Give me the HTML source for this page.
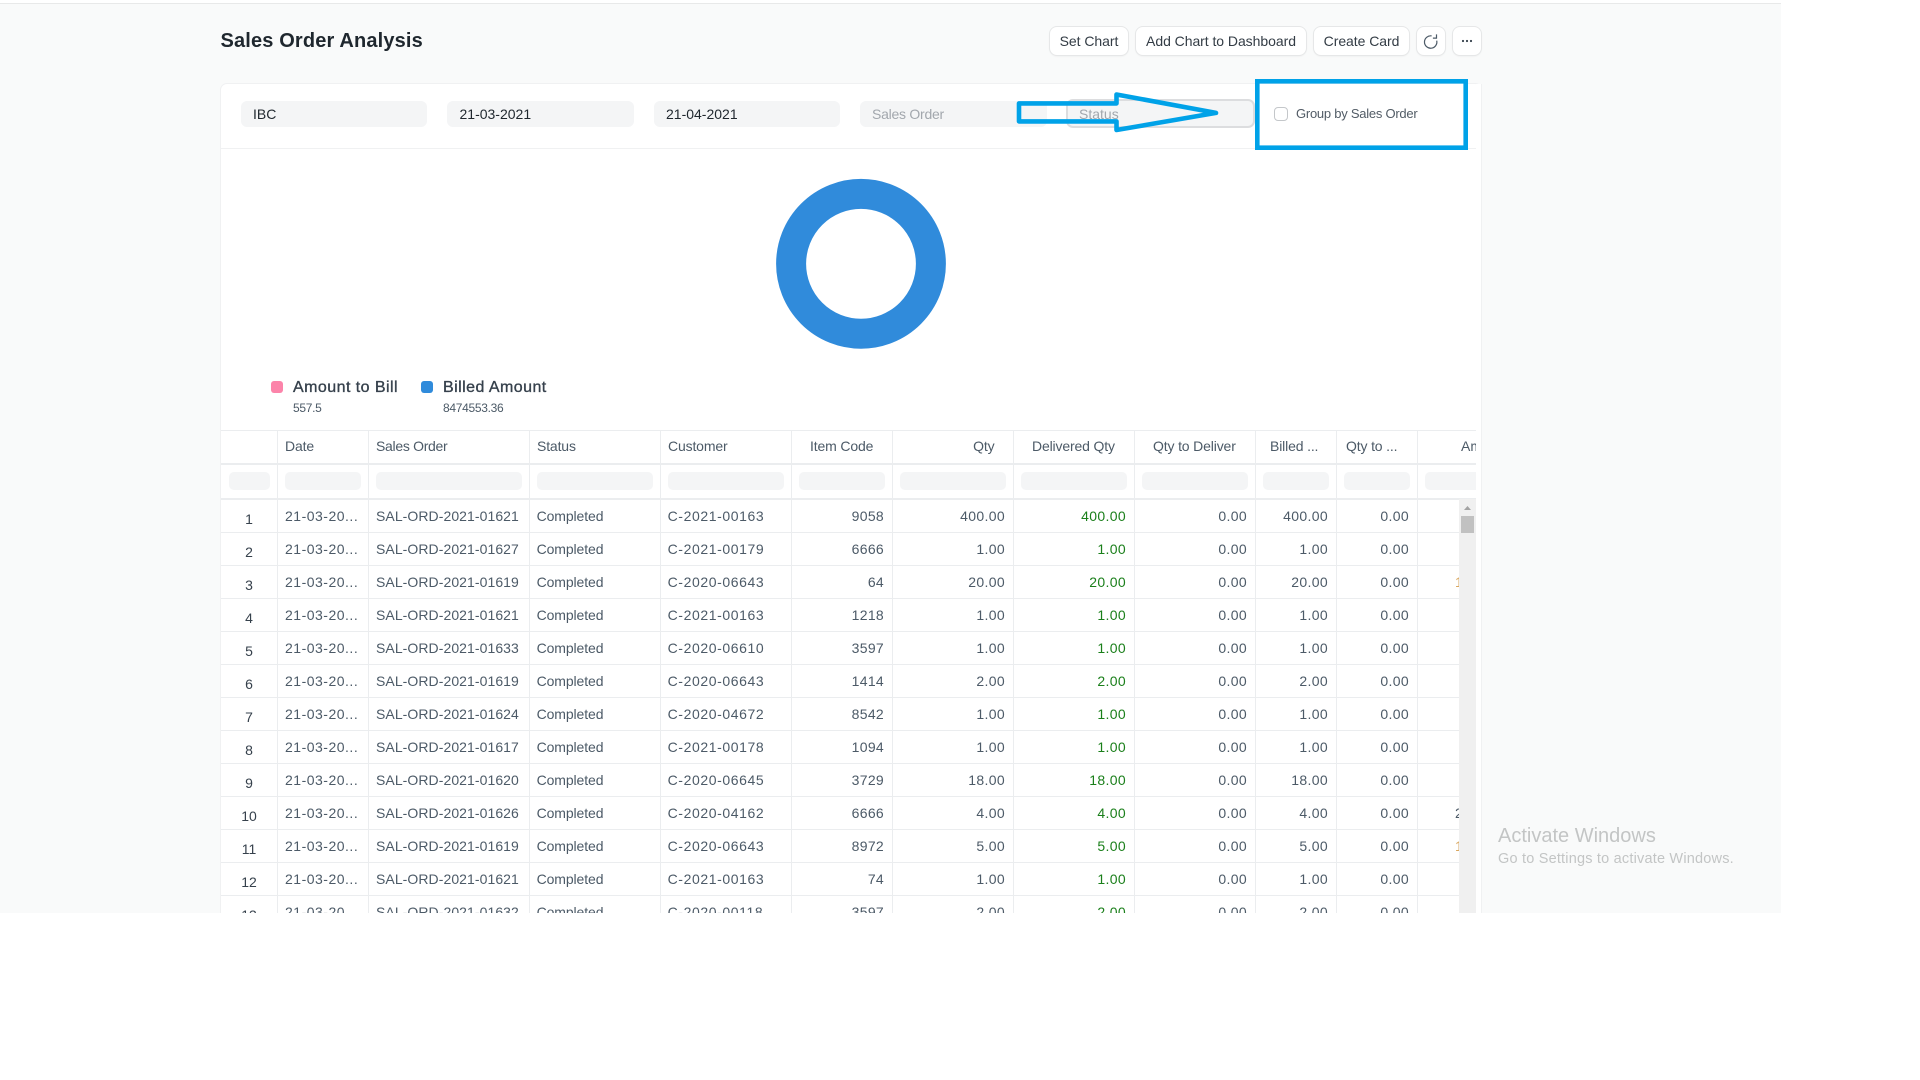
<!DOCTYPE html>
<html><head><meta charset="utf-8"><title>Sales Order Analysis</title>
<style>
html,body{margin:0;padding:0;width:1920px;height:1080px;overflow:hidden;background:#fff}
body{font-family:"Liberation Sans",sans-serif;color:#36414c;position:relative}
div,span,i{position:absolute;display:block;font-style:normal;white-space:nowrap}
#page{left:0;top:4px;width:1781px;height:909px;background:#f9fafa}
#topline{left:0;top:3px;width:1781px;height:1px;background:#e8e9e9}
#clip{left:0;top:0;width:1920px;height:913px;overflow:hidden}
#card{left:220px;top:83px;width:1260px;height:900px;background:#fff;border:1px solid #f0f1f2;border-radius:7px}
.title{left:220.5px;top:29px;line-height:24px;font-size:20px;font-weight:bold;letter-spacing:.15px;color:#1f272e}
.btn{top:27px;height:28px;line-height:28px;background:#fff;border-radius:7px;box-shadow:0 0 0 1px #e6e7e8,0 1px 2px rgba(0,0,0,.08);text-align:center;font-size:14px;letter-spacing:-.05px;color:#333c45}
.f{top:101px;height:26px;background:#f4f5f6;border-radius:6px;line-height:26px;font-size:14px;padding-left:12px;box-sizing:border-box;color:#1f272e}
.ph{color:#a2a7ad;letter-spacing:-.25px}
.sep{left:221px;top:148px;width:1260px;height:1px;background:#f0f1f2}
.lg{top:381px;width:12px;height:12px;border-radius:3px}
.lt{top:377px;line-height:22px;font-size:16px;letter-spacing:.45px;-webkit-text-stroke:.35px #36414c;color:#36414c}
.lv{top:400px;line-height:16px;font-size:12px;color:#4c5a67;letter-spacing:-.3px}
.h{background:#ebedef;height:1px;left:221px;width:1255px}
.v{background:#ebedef;width:1px}
.p{top:472px;height:18px;background:#f4f5f6;border-radius:5px}
.hd{top:436px;line-height:20px;font-size:14px;letter-spacing:-.15px;color:#4c5a67}
#tb{left:221px;top:499px;width:1238px;height:414px;overflow:hidden}
.r{left:0;width:1238px;height:33px;font-size:14px;color:#4c5a67}
.r i{top:7px;line-height:20px}
.r .n{left:8px;width:40px;top:10px;text-align:center;color:#36414c}
.r .a{left:64px;letter-spacing:.5px}
.r .b{left:155px;letter-spacing:.07px}
.r .c{left:315.6px;letter-spacing:-.1px}
.r .e{left:446.6px;letter-spacing:.6px}
.r .g{right:575px;letter-spacing:.3px}
.r .q{right:454px;letter-spacing:.35px}
.r .w{right:333px;letter-spacing:.35px;color:#1a7f1a}
.r .x{right:212px;letter-spacing:.35px}
.r .y{right:131px;letter-spacing:.35px}
.r .z{right:50px;letter-spacing:.35px}
.wm{left:1498px;color:#c3c5c5}
</style></head><body>
<div id="page"></div><div id="topline"></div>
<div id="clip">
<div class="title">Sales Order Analysis</div>
<div class="btn" style="left:1050px;width:78px">Set Chart</div>
<div class="btn" style="left:1136px;width:170px">Add Chart to Dashboard</div>
<div class="btn" style="left:1314px;width:95px">Create Card</div>
<div class="btn" style="left:1417px;width:28px"></div>
<div class="btn" style="left:1453px;width:28px"></div>
<svg style="position:absolute;left:1422px;top:32px" width="18" height="18" viewBox="0 0 18 18" fill="none" stroke="#4c5a67" stroke-width="1.2"><path d="M14.7 8.6A6.2 6.2 0 1 1 9.6 3.9"/><path d="M14.5 2.4V6.1H10.9" stroke-linejoin="miter"/></svg>
<svg style="position:absolute;left:1460px;top:38px" width="14" height="6" viewBox="0 0 14 6" fill="#36414c"><circle cx="3" cy="3" r="1.1"/><circle cx="7" cy="3" r="1.1"/><circle cx="11" cy="3" r="1.1"/></svg>

<div id="card"></div>
<div class="f" style="left:241px;width:186px">IBC</div>
<div class="f" style="left:447px;width:187px;padding-left:12.5px">21-03-2021</div>
<div class="f" style="left:654px;width:186px">21-04-2021</div>
<div class="f ph" style="left:860px;width:187px">Sales Order</div>
<div class="f" style="left:1066px;top:99px;width:189px;height:29px;line-height:27px;border:2px solid #dcdddf;padding-left:11px;color:#a2a7ad;border-radius:7px">Status</div>
<div style="left:1274px;top:107px;width:12px;height:12px;border:1px solid #c4c7ca;border-radius:4px;background:#fff"></div>
<div style="left:1296px;top:104px;line-height:20px;font-size:13px;letter-spacing:-.25px;color:#525c66">Group by Sales Order</div>
<div class="sep"></div>

<svg style="position:absolute;left:761px;top:164px" width="200" height="200" viewBox="0 0 200 200"><circle cx="100" cy="99.8" r="69.9" fill="none" stroke="#308bdb" stroke-width="30"/></svg>

<div class="lg" style="left:271px;background:#fc84aa"></div>
<div class="lt" style="left:293px">Amount to Bill</div>
<div class="lv" style="left:293px">557.5</div>
<div class="lg" style="left:421px;background:#308bdb"></div>
<div class="lt" style="left:443px">Billed Amount</div>
<div class="lv" style="left:443px">8474553.36</div>

<div class="h" style="top:430px"></div>
<div class="h" style="top:463px;height:2px"></div>
<div class="h" style="top:498px;height:2px"></div>

<div class="v" style="left:277px;top:431px;height:32px"></div><div class="v" style="left:277px;top:465px;height:33px"></div><div class="v" style="left:277px;top:500px;height:413px"></div>
<div class="v" style="left:368px;top:431px;height:32px"></div><div class="v" style="left:368px;top:465px;height:33px"></div><div class="v" style="left:368px;top:500px;height:413px"></div>
<div class="v" style="left:529px;top:431px;height:32px"></div><div class="v" style="left:529px;top:465px;height:33px"></div><div class="v" style="left:529px;top:500px;height:413px"></div>
<div class="v" style="left:660px;top:431px;height:32px"></div><div class="v" style="left:660px;top:465px;height:33px"></div><div class="v" style="left:660px;top:500px;height:413px"></div>
<div class="v" style="left:791px;top:431px;height:32px"></div><div class="v" style="left:791px;top:465px;height:33px"></div><div class="v" style="left:791px;top:500px;height:413px"></div>
<div class="v" style="left:892px;top:431px;height:32px"></div><div class="v" style="left:892px;top:465px;height:33px"></div><div class="v" style="left:892px;top:500px;height:413px"></div>
<div class="v" style="left:1013px;top:431px;height:32px"></div><div class="v" style="left:1013px;top:465px;height:33px"></div><div class="v" style="left:1013px;top:500px;height:413px"></div>
<div class="v" style="left:1134px;top:431px;height:32px"></div><div class="v" style="left:1134px;top:465px;height:33px"></div><div class="v" style="left:1134px;top:500px;height:413px"></div>
<div class="v" style="left:1255px;top:431px;height:32px"></div><div class="v" style="left:1255px;top:465px;height:33px"></div><div class="v" style="left:1255px;top:500px;height:413px"></div>
<div class="v" style="left:1336px;top:431px;height:32px"></div><div class="v" style="left:1336px;top:465px;height:33px"></div><div class="v" style="left:1336px;top:500px;height:413px"></div>
<div class="v" style="left:1417px;top:431px;height:32px"></div><div class="v" style="left:1417px;top:465px;height:33px"></div><div class="v" style="left:1417px;top:500px;height:413px"></div>

<div class="hd" style="left:285px">Date</div>
<div class="hd" style="left:376px;letter-spacing:-.3px">Sales Order</div>
<div class="hd" style="left:537px">Status</div>
<div class="hd" style="left:668px">Customer</div>
<div class="hd" style="left:810px">Item Code</div>
<div class="hd" style="left:968px;width:26.5px;text-align:right">Qty</div>
<div class="hd" style="left:1032px">Delivered Qty</div>
<div class="hd" style="left:1153px">Qty to Deliver</div>
<div class="hd" style="left:1270px">Billed ...</div>
<div class="hd" style="left:1346px">Qty to ...</div>
<div style="left:1461px;top:436px;width:15px;overflow:hidden;line-height:20px;font-size:14px;color:#4c5a67">Amount</div>

<div class="p" style="left:229px;width:41px"></div>
<div class="p" style="left:285px;width:76px"></div>
<div class="p" style="left:376px;width:146px"></div>
<div class="p" style="left:537px;width:116px"></div>
<div class="p" style="left:668px;width:116px"></div>
<div class="p" style="left:799px;width:86px"></div>
<div class="p" style="left:900px;width:106px"></div>
<div class="p" style="left:1021px;width:106px"></div>
<div class="p" style="left:1142px;width:106px"></div>
<div class="p" style="left:1263px;width:66px"></div>
<div class="p" style="left:1344px;width:66px"></div>
<div class="p" style="left:1425px;width:51px;border-radius:5px 0 0 5px"></div>

<div class="h" style="top:532px;width:1238px"></div>
<div class="h" style="top:565px;width:1238px"></div>
<div class="h" style="top:598px;width:1238px"></div>
<div class="h" style="top:631px;width:1238px"></div>
<div class="h" style="top:664px;width:1238px"></div>
<div class="h" style="top:697px;width:1238px"></div>
<div class="h" style="top:730px;width:1238px"></div>
<div class="h" style="top:763px;width:1238px"></div>
<div class="h" style="top:796px;width:1238px"></div>
<div class="h" style="top:829px;width:1238px"></div>
<div class="h" style="top:862px;width:1238px"></div>
<div class="h" style="top:895px;width:1238px"></div>

<div id="tb">
<div class="r" style="top:0"><i class="n">1</i><i class="a">21-03-20...</i><i class="b">SAL-ORD-2021-01621</i><i class="c">Completed</i><i class="e">C-2021-00163</i><i class="g">9058</i><i class="q">400.00</i><i class="w">400.00</i><i class="x">0.00</i><i class="y">400.00</i><i class="z">0.00</i></div>
<div class="r" style="top:33px"><i class="n">2</i><i class="a">21-03-20...</i><i class="b">SAL-ORD-2021-01627</i><i class="c">Completed</i><i class="e">C-2021-00179</i><i class="g">6666</i><i class="q">1.00</i><i class="w">1.00</i><i class="x">0.00</i><i class="y">1.00</i><i class="z">0.00</i></div>
<div class="r" style="top:66px"><i class="n">3</i><i class="a">21-03-20...</i><i class="b">SAL-ORD-2021-01619</i><i class="c">Completed</i><i class="e">C-2020-06643</i><i class="g">64</i><i class="q">20.00</i><i class="w">20.00</i><i class="x">0.00</i><i class="y">20.00</i><i class="z">0.00</i><i style="left:1234px;color:#d9a75f">1</i></div>
<div class="r" style="top:99px"><i class="n">4</i><i class="a">21-03-20...</i><i class="b">SAL-ORD-2021-01621</i><i class="c">Completed</i><i class="e">C-2021-00163</i><i class="g">1218</i><i class="q">1.00</i><i class="w">1.00</i><i class="x">0.00</i><i class="y">1.00</i><i class="z">0.00</i></div>
<div class="r" style="top:132px"><i class="n">5</i><i class="a">21-03-20...</i><i class="b">SAL-ORD-2021-01633</i><i class="c">Completed</i><i class="e">C-2020-06610</i><i class="g">3597</i><i class="q">1.00</i><i class="w">1.00</i><i class="x">0.00</i><i class="y">1.00</i><i class="z">0.00</i></div>
<div class="r" style="top:165px"><i class="n">6</i><i class="a">21-03-20...</i><i class="b">SAL-ORD-2021-01619</i><i class="c">Completed</i><i class="e">C-2020-06643</i><i class="g">1414</i><i class="q">2.00</i><i class="w">2.00</i><i class="x">0.00</i><i class="y">2.00</i><i class="z">0.00</i></div>
<div class="r" style="top:198px"><i class="n">7</i><i class="a">21-03-20...</i><i class="b">SAL-ORD-2021-01624</i><i class="c">Completed</i><i class="e">C-2020-04672</i><i class="g">8542</i><i class="q">1.00</i><i class="w">1.00</i><i class="x">0.00</i><i class="y">1.00</i><i class="z">0.00</i></div>
<div class="r" style="top:231px"><i class="n">8</i><i class="a">21-03-20...</i><i class="b">SAL-ORD-2021-01617</i><i class="c">Completed</i><i class="e">C-2021-00178</i><i class="g">1094</i><i class="q">1.00</i><i class="w">1.00</i><i class="x">0.00</i><i class="y">1.00</i><i class="z">0.00</i></div>
<div class="r" style="top:264px"><i class="n">9</i><i class="a">21-03-20...</i><i class="b">SAL-ORD-2021-01620</i><i class="c">Completed</i><i class="e">C-2020-06645</i><i class="g">3729</i><i class="q">18.00</i><i class="w">18.00</i><i class="x">0.00</i><i class="y">18.00</i><i class="z">0.00</i></div>
<div class="r" style="top:297px"><i class="n">10</i><i class="a">21-03-20...</i><i class="b">SAL-ORD-2021-01626</i><i class="c">Completed</i><i class="e">C-2020-04162</i><i class="g">6666</i><i class="q">4.00</i><i class="w">4.00</i><i class="x">0.00</i><i class="y">4.00</i><i class="z">0.00</i><i style="left:1234px">2</i></div>
<div class="r" style="top:330px"><i class="n">11</i><i class="a">21-03-20...</i><i class="b">SAL-ORD-2021-01619</i><i class="c">Completed</i><i class="e">C-2020-06643</i><i class="g">8972</i><i class="q">5.00</i><i class="w">5.00</i><i class="x">0.00</i><i class="y">5.00</i><i class="z">0.00</i><i style="left:1234px;color:#d9a75f">1</i></div>
<div class="r" style="top:363px"><i class="n">12</i><i class="a">21-03-20...</i><i class="b">SAL-ORD-2021-01621</i><i class="c">Completed</i><i class="e">C-2021-00163</i><i class="g">74</i><i class="q">1.00</i><i class="w">1.00</i><i class="x">0.00</i><i class="y">1.00</i><i class="z">0.00</i></div>
<div class="r" style="top:396px"><i class="n">13</i><i class="a">21-03-20...</i><i class="b">SAL-ORD-2021-01632</i><i class="c">Completed</i><i class="e">C-2020-00118</i><i class="g">3597</i><i class="q">2.00</i><i class="w">2.00</i><i class="x">0.00</i><i class="y">2.00</i><i class="z">0.00</i></div>
</div>

<div style="left:1459px;top:499px;width:17px;height:414px;background:#f0f0f0"></div>
<div style="left:1461px;top:516px;width:13px;height:17px;background:#c1c1c1"></div>
<svg style="position:absolute;left:1461px;top:504px" width="13" height="8" viewBox="0 0 13 8"><path d="M6.5 2 L10 6 H3 Z" fill="#a3a3a3"/></svg>
<div style="left:1476px;top:84px;width:5px;height:829px;background:#fff"></div>
<div style="left:1481px;top:84px;width:1px;height:829px;background:#f0f1f2"></div>

<div class="wm" style="top:823px;line-height:26px;font-size:20px">Activate Windows</div>
<div class="wm" style="top:849px;line-height:20px;font-size:14.5px;letter-spacing:.2px">Go to Settings to activate Windows.</div>

<svg style="position:absolute;left:1010px;top:75px" width="480" height="80" viewBox="1010 75 480 80" fill="none" stroke="#00a2e8" stroke-width="4.6"><rect x="1257.3" y="81.3" width="208.4" height="66.4"/><path d="M1019 103.4H1116.5V94.5L1216 112.9L1116.5 130V121.4H1019Z" stroke-linejoin="round"/></svg>
</div>
</body></html>
